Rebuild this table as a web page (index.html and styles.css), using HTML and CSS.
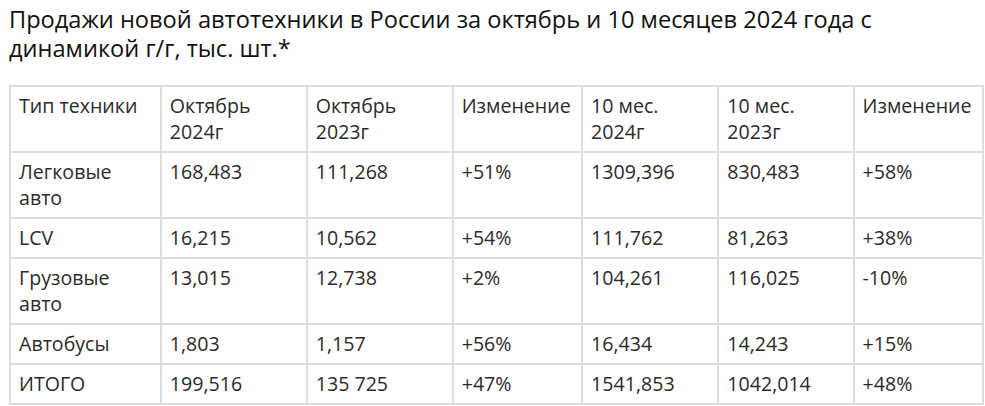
FILE: index.html
```html
<!DOCTYPE html>
<html lang="ru">
<head>
<meta charset="utf-8">
<link rel="stylesheet" href="styles.css">
</head>
<body>
<div class="page">
  <h2 class="title">Продажи новой автотехники в России за октябрь и 10 месяцев 2024 года с динамикой г/г, тыс. шт.*</h2>
  <table class="sales">
    <colgroup>
      <col class="c1"><col class="c2"><col class="c3"><col class="c4"><col class="c5"><col class="c6"><col class="c7">
    </colgroup>
    <tr><td>Тип техники</td><td>Октябрь 2024г</td><td>Октябрь 2023г</td><td>Изменение</td><td>10 мес. 2024г</td><td>10 мес. 2023г</td><td>Изменение</td></tr>
    <tr><td>Легковые авто</td><td>168,483</td><td>111,268</td><td>+51%</td><td>1309,396</td><td>830,483</td><td>+58%</td></tr>
    <tr><td>LCV</td><td>16,215</td><td>10,562</td><td>+54%</td><td>111,762</td><td>81,263</td><td>+38%</td></tr>
    <tr><td>Грузовые авто</td><td>13,015</td><td>12,738</td><td>+2%</td><td>104,261</td><td>116,025</td><td>-10%</td></tr>
    <tr><td>Автобусы</td><td>1,803</td><td>1,157</td><td>+56%</td><td>16,434</td><td>14,243</td><td>+15%</td></tr>
    <tr><td>ИТОГО</td><td>199,516</td><td>135 725</td><td>+47%</td><td>1541,853</td><td>1042,014</td><td>+48%</td></tr>
  </table>
</div>
</body>
</html>
```
FILE: styles.css
```css
html, body {
  margin: 0;
  padding: 0;
  background: #fff;
}
.page {
  padding: 5px 0 0 9px;
  font-family: "Open Sans", "Noto Sans", sans-serif;
}
.title {
  margin: 0 0 22px 0;
  font-size: 23.6px;
  line-height: 29px;
  font-weight: 400;
  color: #111;
  width: 930px;
}
.sales {
  border-collapse: collapse;
  table-layout: fixed;
  width: 975px;
  font-size: 19.6px;
  line-height: 26px;
  color: #2b2b2b;
}
.sales td {
  border: 2px solid #dedede;
  padding: 6px 7px 6px 8px;
  vertical-align: top;
}
.c1 { width: 15.5%; }
.c2 { width: 15%; }
.c3 { width: 15%; }
.c4 { width: 13.3%; }
.c5 { width: 14%; }
.c6 { width: 13.9%; }
.c7 { width: 13.3%; }
```
